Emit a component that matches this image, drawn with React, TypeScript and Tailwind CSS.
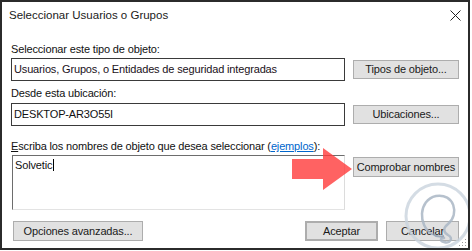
import React from 'react';

const Btn = ({ children, className = '' }: { children: React.ReactNode; className?: string }) => (
    <div
        className={`flex shrink-0 items-center justify-center border border-[#adadad] bg-[#e1e1e1] text-[#1a1a1a] ${className}`}
    >
        {children}
    </div>
);

const App = () => {
    return (
        <div className="h-[251px] w-[472px] bg-white">
            <div className="relative h-[250px] w-[470px] overflow-hidden border-2 border-[#2b2b2b] bg-white font-['Liberation_Sans',Arial,sans-serif] text-[11px] leading-[13px] tracking-[-0.15px] text-[#111]">
                {/* title bar */}
                <div className="flex h-[27px] items-center justify-between pl-[7px] pr-[7px]">
                    <span className="text-[11.5px] tracking-normal text-[#1a1a1a]">
                        Seleccionar Usuarios o Grupos
                    </span>
                    <svg width="11" height="11" viewBox="0 0 11 11">
                        <path d="M0.5 0.5 L10.5 10.5 M10.5 0.5 L0.5 10.5" stroke="#222" strokeWidth="1" />
                    </svg>
                </div>

                <div className="flex flex-col pl-[9px] pr-[9px]">
                    <div className="mt-[14px]">Seleccionar este tipo de objeto:</div>
                    <div className="mt-[2px] flex items-center gap-[8px]">
                        <div className="flex h-[23px] w-[334px] items-center border border-[#3a3a3a] pl-[2px] text-[#1a1020]">
                            Usuarios, Grupos, o Entidades de seguridad integradas
                        </div>
                        <Btn className="h-[19px] w-[106px]">Tipos de objeto...</Btn>
                    </div>

                    <div className="mt-[6px]">Desde esta ubicación:</div>
                    <div className="mt-[3px] flex items-center gap-[8px]">
                        <div className="flex h-[23px] w-[334px] items-center border border-[#3a3a3a] pl-[2px]">
                            DESKTOP-AR3O55I
                        </div>
                        <Btn className="h-[19px] w-[106px]">Ubicaciones...</Btn>
                    </div>

                    <div className="mt-[14px]">
                        <span className="underline">E</span>scriba los nombres de objeto que desea seleccionar (
                        <span className="text-[#0066cc] underline">ejemplos</span>):
                    </div>
                    <div className="mt-[2px] flex items-start gap-[8px]">
                        <div className="ml-[1px] h-[55px] w-[333px] border-l border-t border-b border-r border-l-[#6d6d6d] border-t-[#6d6d6d] border-b-[#e3e3e3] border-r-[#dcdcdc] pl-[2px] pt-[3px]">
                            <span className="border-r border-black pr-[1px]">Solvetic</span>
                        </div>
                        <Btn className="mt-[2px] h-[20px] w-[106px]">Comprobar nombres</Btn>
                    </div>

                    <div className="mt-[11px] flex items-center">
                        <Btn className="ml-[2px] h-[20px] w-[130px]">Opciones avanzadas...</Btn>
                        <div className="ml-auto flex gap-[8px]">
                            <Btn className="h-[20px] w-[73px] border-2 border-[#0078d7]">Aceptar</Btn>
                            <Btn className="h-[20px] w-[73px]">Cancelar</Btn>
                        </div>
                    </div>
                </div>

                {/* red arrow */}
                <svg
                    className="absolute left-[289px] top-[145px]"
                    width="62"
                    height="44"
                    viewBox="0 0 62 44"
                >
                    <path d="M1 12 L32 12 L32 1 L61 22 L32 43 L32 32 L1 32 Z" fill="#ff3b3b" fillOpacity="0.8" />
                </svg>

                {/* watermark */}
                <svg
                    className="absolute left-[398px] top-[176px]"
                    width="72"
                    height="74"
                    viewBox="0 0 72 74"
                >
                    <circle cx="38" cy="38" r="32" fill="none" stroke="#c9d3dd" strokeWidth="3" strokeOpacity="0.8" />
                    <path
                        d="M32 56 C18 48 18 22 36 18 C54 15 60 36 48 46 C43 50 43 54 48 57 C54 60 50 66 44 64 C40 63 40 60 44 60"
                        fill="none"
                        stroke="#a9b6c4"
                        strokeWidth="2.5"
                        strokeOpacity="0.85"
                        strokeLinecap="round"
                    />
                    <path d="M33 56 C36 59 40 59 44 58" fill="none" stroke="#8c9db0" strokeWidth="2" strokeOpacity="0.8" />
                </svg>

                {/* resize grip */}
                <svg className="absolute bottom-[1px] right-[1px]" width="8" height="8" viewBox="0 0 8 8">
                    <rect x="6" y="0" width="1" height="1" fill="#9a9a9a" />
                    <rect x="3" y="3" width="1" height="1" fill="#9a9a9a" />
                    <rect x="6" y="3" width="1" height="1" fill="#9a9a9a" />
                    <rect x="0" y="6" width="1" height="1" fill="#9a9a9a" />
                    <rect x="3" y="6" width="1" height="1" fill="#9a9a9a" />
                    <rect x="6" y="6" width="1" height="1" fill="#9a9a9a" />
                </svg>
            </div>
        </div>
    );
};

export default App;
